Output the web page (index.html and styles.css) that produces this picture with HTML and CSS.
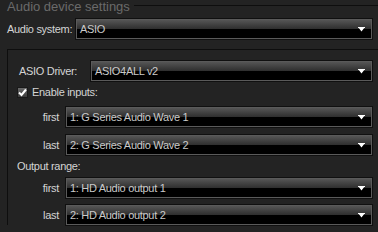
FILE: index.html
```html
<!DOCTYPE html>
<html lang="en">
  <head>
    <meta charset="UTF-8" />
    <title>Audio device settings</title>
    <link rel="stylesheet" href="styles.css">
  </head>
  <body>
    <div class="panel">
      <div class="panel-head">
        <span class="panel-title">Audio device settings</span>
        <span class="panel-rule"></span>
      </div>

      <div class="field field-system">
        <label class="field-label">Audio system:</label>
        <div class="combo">
          <span class="combo-text">ASIO</span>
          <svg class="combo-arrow" width="7" height="5" viewBox="0 0 7 5"><path d="M0 0H7V1H6.2L3.5 4.6 0.8 1H0Z" fill="#fff"/></svg>
        </div>
      </div>

      <div class="subgroup">
        <div class="field field-driver">
          <label class="field-label">ASIO Driver:</label>
          <div class="combo">
            <span class="combo-text">ASIO4ALL v2</span>
            <svg class="combo-arrow" width="7" height="5" viewBox="0 0 7 5"><path d="M0 0H7V1H6.2L3.5 4.6 0.8 1H0Z" fill="#fff"/></svg>
          </div>
        </div>

        <label class="check">
          <span class="check-box">
            <svg width="9" height="9" viewBox="0 0 9 9"><path d="M1 4.5L3.5 7 8 1.5" fill="none" stroke="#fff" stroke-width="2"/></svg>
          </span>
          Enable inputs:
        </label>

        <div class="range-row">
          <span class="range-label">first</span>
          <div class="combo">
            <span class="combo-text">1: G Series Audio Wave 1</span>
            <svg class="combo-arrow" width="7" height="5" viewBox="0 0 7 5"><path d="M0 0H7V1H6.2L3.5 4.6 0.8 1H0Z" fill="#fff"/></svg>
          </div>
        </div>
        <div class="range-row">
          <span class="range-label">last</span>
          <div class="combo">
            <span class="combo-text">2: G Series Audio Wave 2</span>
            <svg class="combo-arrow" width="7" height="5" viewBox="0 0 7 5"><path d="M0 0H7V1H6.2L3.5 4.6 0.8 1H0Z" fill="#fff"/></svg>
          </div>
        </div>

        <div class="section-label">Output range:</div>

        <div class="range-row range-out-first">
          <span class="range-label">first</span>
          <div class="combo">
            <span class="combo-text">1: HD Audio output 1</span>
            <svg class="combo-arrow" width="7" height="5" viewBox="0 0 7 5"><path d="M0 0H7V1H6.2L3.5 4.6 0.8 1H0Z" fill="#fff"/></svg>
          </div>
        </div>
        <div class="range-row range-out-last">
          <span class="range-label">last</span>
          <div class="combo">
            <span class="combo-text">2: HD Audio output 2</span>
            <svg class="combo-arrow" width="7" height="5" viewBox="0 0 7 5"><path d="M0 0H7V1H6.2L3.5 4.6 0.8 1H0Z" fill="#fff"/></svg>
          </div>
        </div>
      </div>
    </div>
  </body>
</html>
```

FILE: styles.css
```css
* {
  box-sizing: border-box;
}
html,
body {
  margin: 0;
  padding: 0;
  width: 378px;
  height: 232px;
  overflow: hidden;
  background-color: #232323;
  color: #d4d4d4;
  font-family: 'Liberation Sans', Arial, sans-serif;
  font-size: 11px;
  letter-spacing: -0.3px;
}
.panel-head {
  display: flex;
  height: 14px;
  padding-left: 7px;
}
.panel-title {
  font-size: 13px;
  line-height: 14px;
  letter-spacing: 0;
  color: #6a6a6a;
  white-space: nowrap;
}
.panel-rule {
  flex: 1;
  height: 1px;
  margin-top: 5px;
  margin-left: 4px;
  background-color: #0e0e0e;
}
.field {
  display: flex;
  align-items: center;
}
.field-label {
  flex-shrink: 0;
  white-space: nowrap;
}
.field-system {
  margin-top: 5px;
  padding: 0 6px 0 7px;
}
.field-system .field-label {
  width: 69px;
}
.field-driver {
  padding-left: 11px;
}
.field-driver .field-label {
  width: 72px;
}
.combo {
  flex: 1;
  display: flex;
  align-items: center;
  height: 20px;
  padding: 0 6px 0 3px;
  border: 1px solid #5a5a5a;
  box-shadow: 0 0 0 1px #101010;
  background: linear-gradient(#555 0, #2e2e2e 50%, #000 50%, #000 100%);
  color: #cacaca;
}
.combo-text {
  flex: 1;
  white-space: nowrap;
}
.combo-arrow {
  display: block;
}
.subgroup {
  margin: 10px 0 0 7px;
  padding: 11px 6px 0 0;
  border-top: 1px solid #0e0e0e;
  border-left: 1px solid #0e0e0e;
}
.check {
  display: flex;
  align-items: center;
  height: 14px;
  margin-top: 4px;
  padding-left: 9px;
  white-space: nowrap;
}
.check-box {
  display: flex;
  align-items: center;
  justify-content: center;
  width: 11px;
  height: 11px;
  margin-right: 4px;
  border: 1px solid #1a1a1a;
  background: linear-gradient(#6a6a6a, #3c3c3c);
}
.range-row {
  display: flex;
  align-items: center;
  margin-top: 8px;
}
.range-label {
  flex-shrink: 0;
  width: 51px;
  margin-right: 7px;
  text-align: right;
}
.section-label {
  height: 14px;
  line-height: 14px;
  margin-top: 4px;
  padding-left: 9px;
}
.range-out-first {
  margin-top: 5px;
}
.range-out-last {
  margin-top: 7px;
}
```
